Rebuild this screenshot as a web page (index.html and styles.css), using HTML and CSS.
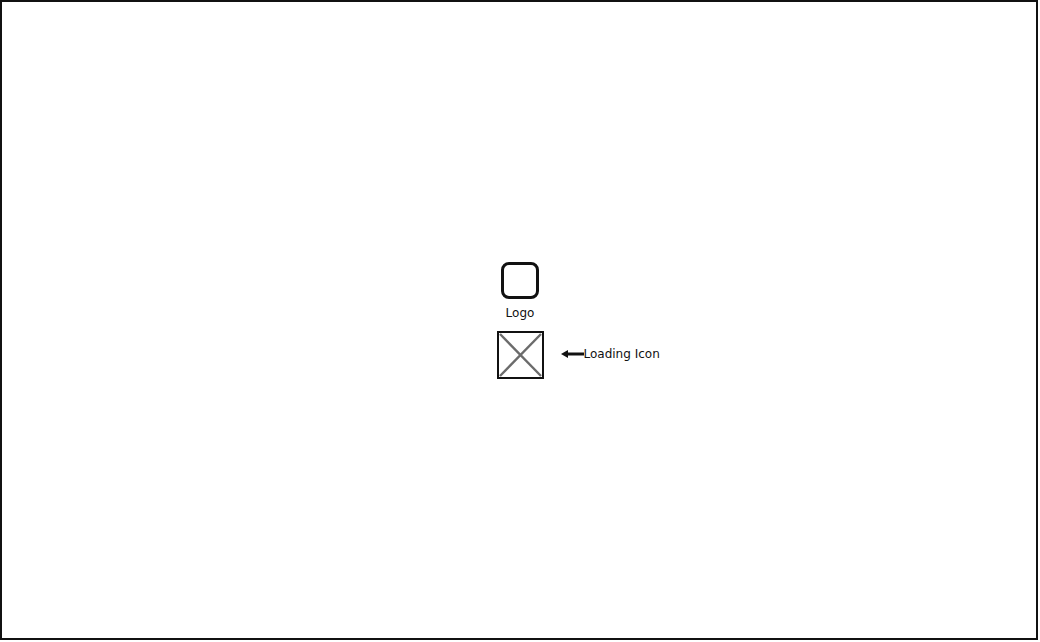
FILE: index.html
```html
<!DOCTYPE html>
<html>
<head>
<meta charset="utf-8">
<link rel="stylesheet" href="styles.css">
</head>
<body>
<div class="frame">
  <div class="stack">
    <div class="logo"></div>
    <div class="logo-label">Logo</div>
    <div class="loader">
      <svg class="loader-x" width="43" height="44" viewBox="0 0 43 44">
        <line x1="1" y1="1" x2="42" y2="43" stroke="#6b6b6b" stroke-width="2.4"/>
        <line x1="42" y1="1" x2="1" y2="43" stroke="#6b6b6b" stroke-width="2.4"/>
      </svg>
      <div class="note">
        <svg class="arrow" width="23" height="10" viewBox="0 0 23 10">
          <line x1="5" y1="5" x2="23" y2="5" stroke="#111" stroke-width="3"/>
          <path d="M0 5 L7 1 L7 9 Z" fill="#111"/>
        </svg>
        <span class="note-text">Loading Icon</span>
      </div>
    </div>
  </div>
</div>
</body>
</html>
```
FILE: styles.css
```css
html, body {
  margin: 0;
  padding: 0;
  background: #ffffff;
}
.frame {
  box-sizing: border-box;
  width: 1038px;
  height: 640px;
  border: 2px solid #111;
  display: flex;
  align-items: center;
  justify-content: center;
  font-family: "DejaVu Sans", "Liberation Sans", sans-serif;
  color: #111;
}
.stack {
  display: flex;
  flex-direction: column;
  align-items: center;
  margin-left: 2px;
}
.logo {
  box-sizing: border-box;
  width: 38px;
  height: 37px;
  border: 3px solid #111;
  border-radius: 8px;
}
.logo-label {
  margin-top: 7px;
  font-size: 12px;
  line-height: 14px;
  height: 14px;
}
.loader {
  position: relative;
  box-sizing: border-box;
  width: 47px;
  height: 48px;
  margin-top: 11px;
  border: 2px solid #111;
}
.loader-x {
  display: block;
}
.note {
  position: absolute;
  left: 62px;
  top: 14px;
  display: flex;
  align-items: center;
  white-space: nowrap;
}
.arrow {
  display: block;
}
.note-text {
  font-size: 12px;
  line-height: 14px;
}
```
